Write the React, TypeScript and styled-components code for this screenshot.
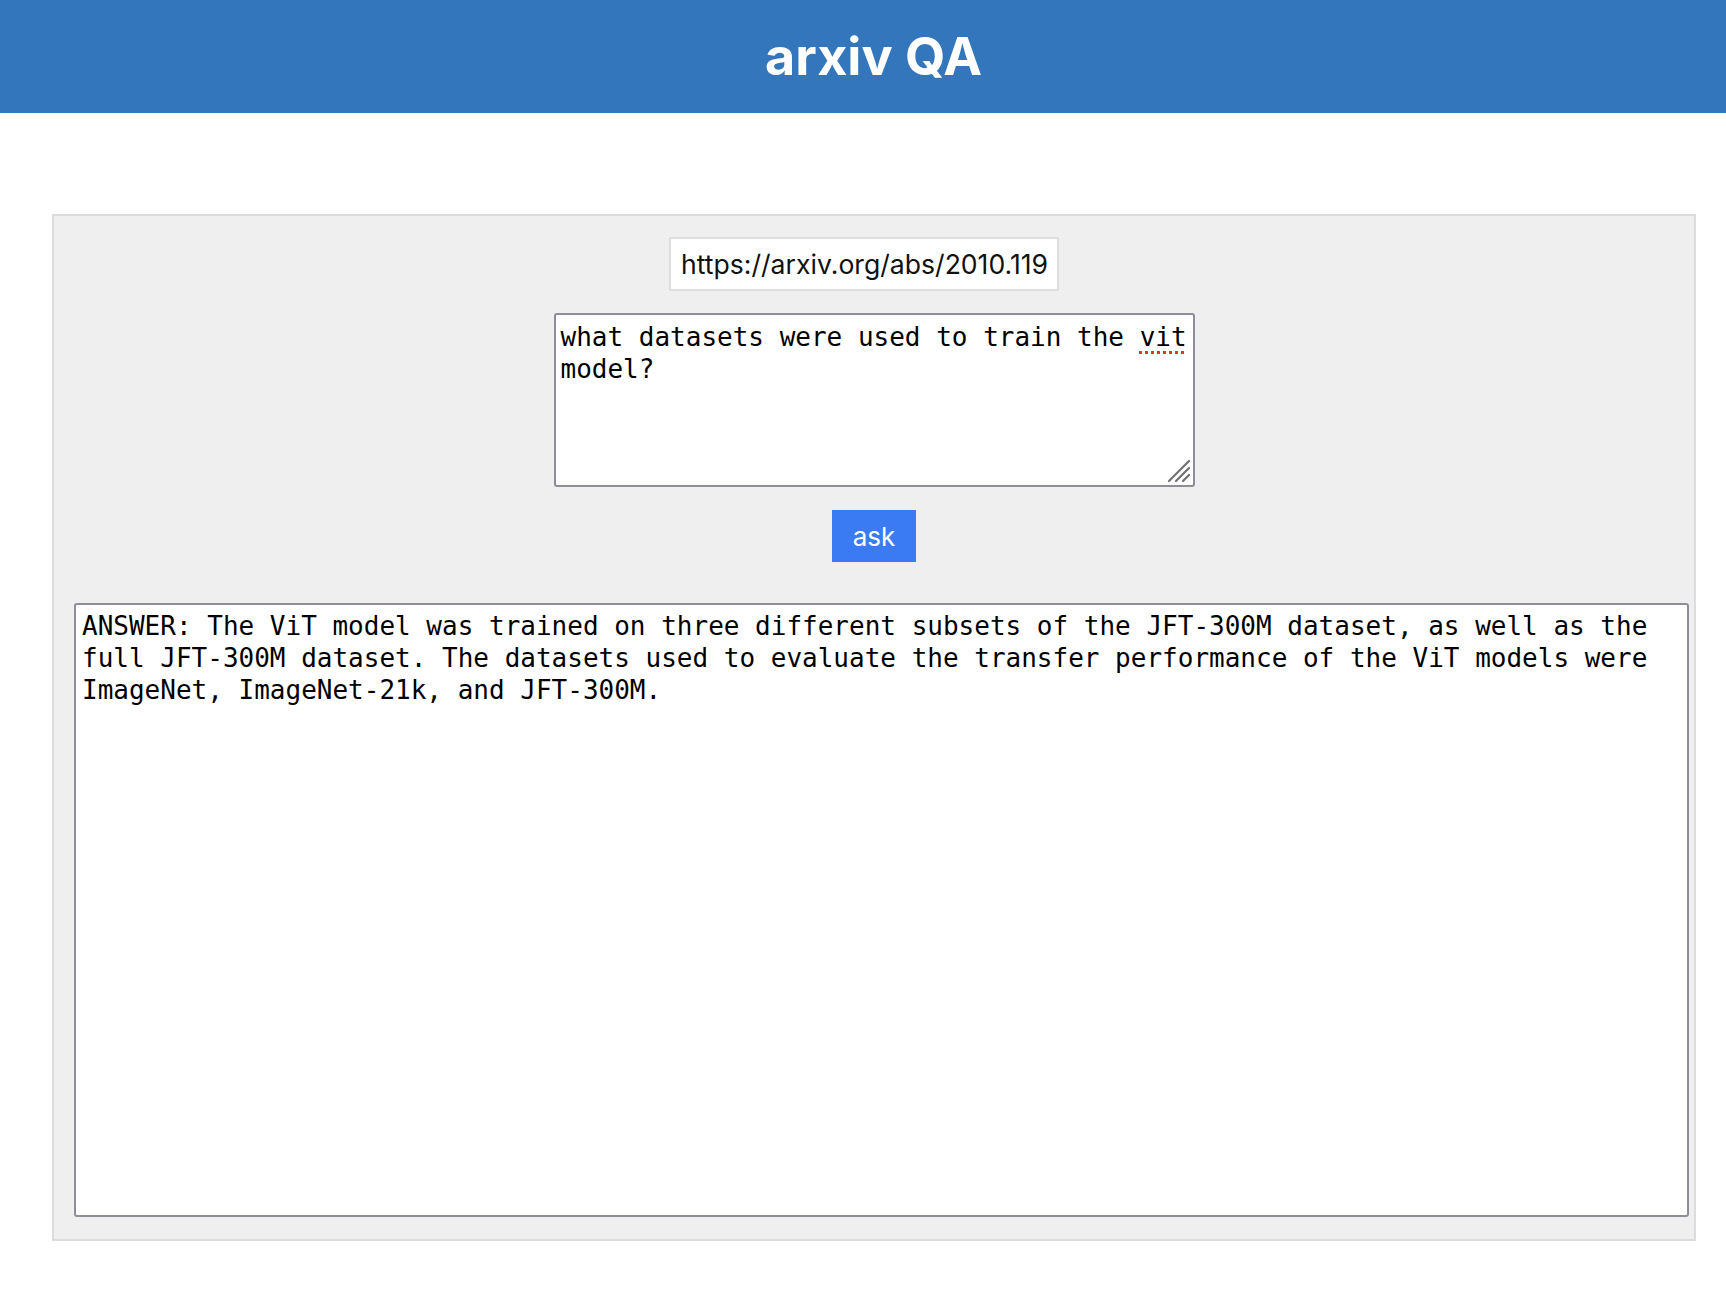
import React from "react";
import styled, { createGlobalStyle } from "styled-components";

const GlobalStyle = createGlobalStyle`
  html, body {
    margin: 0;
    padding: 0;
    background: #ffffff;
    font-family: Inter, "Noto Sans", "Liberation Sans", sans-serif;
  }
  * { box-sizing: border-box; }
`;

const Header = styled.header`
  height: 113px;
  background: #3376bb;
  display: flex;
  align-items: center;
  justify-content: center;
`;

const Title = styled.h1`
  margin: 0;
  padding-left: 21px;
  color: #ffffff;
  font-family: Inter, "Noto Sans", sans-serif;
  font-weight: 700;
  font-size: 52px;
  line-height: 1;
`;

const Main = styled.main`
  padding: 101px 30px 0 52px;
`;

const Panel = styled.section`
  background: #efefef;
  border: 2px solid #dcdcdc;
  padding: 21px 20px 22px;
  display: flex;
  flex-direction: column;
  align-items: center;
`;

const UrlInput = styled.input`
  width: 390px;
  height: 54px;
  margin-right: 20px;
  border: 2px solid #dedede;
  background: #ffffff;
  padding: 0 10px;
  font-family: Inter, "Noto Sans", sans-serif;
  font-size: 26.6px;
  color: #111111;
  outline: none;
`;

const QuestionWrap = styled.div`
  position: relative;
  margin-top: 22px;
  width: 641px;
  height: 174px;
`;

const Question = styled.div`
  width: 100%;
  height: 100%;
  border: 2px solid #8e8d99;
  border-radius: 3px;
  background: #ffffff;
  padding: 6px 2px 6px 5px;
  font-family: "DejaVu Sans Mono", "Liberation Mono", monospace;
  font-size: 26px;
  line-height: 32px;
  color: #000000;
  white-space: pre-wrap;
  overflow: hidden;
`;

const Grabber = styled.svg`
  position: absolute;
  right: 4px;
  bottom: 4px;
  width: 24px;
  height: 24px;
  pointer-events: none;
`;

const Misspelled = styled.span`
  text-decoration: underline dotted #e5322d;
  text-decoration-thickness: 3px;
  text-underline-offset: 5px;
`;

const AskButton = styled.button`
  margin-top: 23px;
  width: 84px;
  height: 52px;
  border: none;
  background: #3a7bf3;
  color: #ffffff;
  font-family: Inter, "Noto Sans", sans-serif;
  font-size: 26px;
  padding: 0;
  cursor: pointer;
`;

const Answer = styled.div`
  margin-top: 41px;
  align-self: stretch;
  margin-right: -15px;
  height: 614px;
  border: 2px solid #8e8d99;
  border-radius: 3px;
  background: #ffffff;
  padding: 5px 6px;
  font-family: "DejaVu Sans Mono", "Liberation Mono", monospace;
  font-size: 26px;
  line-height: 32px;
  color: #000000;
  white-space: pre-wrap;
  overflow-wrap: break-word;
`;

const answerText =
  "ANSWER: The ViT model was trained on three different subsets of the JFT-300M dataset, as well as the full JFT-300M dataset. The datasets used to evaluate the transfer performance of the ViT models were ImageNet, ImageNet-21k, and JFT-300M.";

export default function App() {
  return (
    <>
      <GlobalStyle />
      <Header>
        <Title>arxiv QA</Title>
      </Header>
      <Main>
        <Panel>
          <UrlInput type="text" defaultValue="https://arxiv.org/abs/2010.119" />
          <QuestionWrap>
            <Question role="textbox" aria-multiline="true">
              what datasets were used to train the <Misspelled>vit</Misspelled> model?
            </Question>
            <Grabber viewBox="0 0 24 24" aria-hidden="true">
              <g stroke="#6f6f6f" strokeWidth="2.2" strokeLinecap="round">
                <line x1="2" y1="22" x2="22" y2="2" />
                <line x1="9" y1="22" x2="22" y2="9" />
                <line x1="16" y1="22" x2="22" y2="16" />
              </g>
            </Grabber>
          </QuestionWrap>
          <AskButton type="button">ask</AskButton>
          <Answer>{answerText}</Answer>
        </Panel>
      </Main>
    </>
  );
}
